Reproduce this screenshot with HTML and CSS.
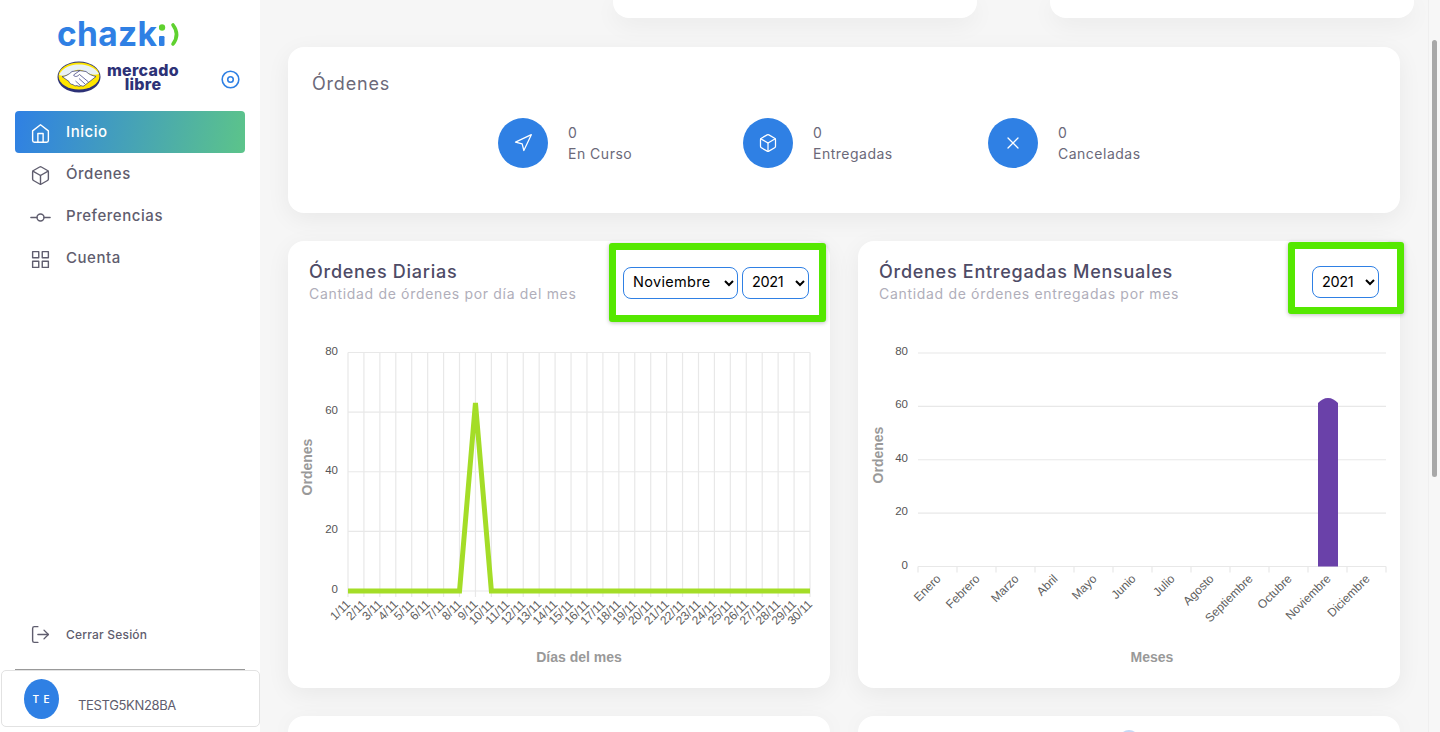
FILE: index.html
```html
<!DOCTYPE html>
<html lang="es">
<head>
    <meta charset="UTF-8">
    <title>Chazki - Inicio</title>
    <link rel="stylesheet" href="styles.css">
</head>
<body>
    <div class="app">
        <aside class="sidebar">
            <div class="brand">
                <div class="chazki">
                    <span class="chazki-word">chazk</span>
                    <svg class="chazki-mark" width="26" height="30" viewBox="0 0 26 30">
                        <rect x="0" y="14" width="5.5" height="10" rx="1.2" fill="#2f80e4"/>
                        <circle cx="3" cy="5.5" r="3.2" fill="#5fd12f"/>
                        <path d="M14 3c4.500 6 4.500 13 0 19" fill="none" stroke="#5fd12f" stroke-width="3.6" stroke-linecap="round"/>
                    </svg>
                </div>
                <div class="meli-row">
                    <svg class="meli-logo" width="44" height="32" viewBox="0 0 44 32">
                        <ellipse cx="22" cy="16" rx="21.500" ry="15.500" fill="#2d3277"/>
                        <ellipse cx="22" cy="15" rx="20.500" ry="13.500" fill="#ffe600"/>
                        <path d="M2 14C8 16 12 13 16 10.500 20 8 24 8 28 10.500 32 13 37 15 42 13 38 6 30 3.500 22 3.500S6 6 2 14z" fill="#e9f1f5"/>
                        <path d="M5 15.500c3 0 7-2 10-5l7-1 7 1c3 3 6 4 10 5l-5 4-6 4.500c-1 1.500-3 1.500-4 .5-1 1-3 1-4 0-1.500 .8-3 .2-4-1-2 0-3.500-1-4-3z" fill="#fff" stroke="#2d3277" stroke-width=".7"/>
                        <path d="M23 9.500l-6.500 4.500c1.500 2.500 4 1.500 6-.5l9 7.500M28 23l-6-5.500M23.500 24.500L18.500 20" fill="none" stroke="#2d3277" stroke-width=".7"/>
                    </svg>
                    <div class="meli-word">mercado<br>libre</div>
                    <svg class="icon disc" viewBox="0 0 24 24"><circle cx="12" cy="12" r="10.5"/><circle cx="12" cy="12" r="3.5"/></svg>
                </div>
            </div>

            <nav class="menu">
                <a class="menu-item active">
                    <svg class="icon" viewBox="0 0 24 24"><path d="M3 9l9-7 9 7v11a2 2 0 0 1-2 2H5a2 2 0 0 1-2-2z"/><polyline points="9 22 9 12 15 12 15 22"/></svg>
                    <span>Inicio</span>
                </a>
                <a class="menu-item">
                    <svg class="icon" viewBox="0 0 24 24"><path d="M21 16V8a2 2 0 0 0-1-1.73l-7-4a2 2 0 0 0-2 0l-7 4A2 2 0 0 0 3 8v8a2 2 0 0 0 1 1.73l7 4a2 2 0 0 0 2 0l7-4A2 2 0 0 0 21 16z"/><polyline points="3.27 6.96 12 12.01 20.73 6.96"/><line x1="12" y1="22.08" x2="12" y2="12"/></svg>
                    <span>Órdenes</span>
                </a>
                <a class="menu-item">
                    <svg class="icon" viewBox="0 0 24 24"><circle cx="12" cy="12" r="4"/><line x1="1" y1="12" x2="8" y2="12"/><line x1="16" y1="12" x2="23" y2="12"/></svg>
                    <span>Preferencias</span>
                </a>
                <a class="menu-item">
                    <svg class="icon" viewBox="0 0 24 24"><rect x="3" y="3" width="7" height="7"/><rect x="14" y="3" width="7" height="7"/><rect x="14" y="14" width="7" height="7"/><rect x="3" y="14" width="7" height="7"/></svg>
                    <span>Cuenta</span>
                </a>
            </nav>

            <div class="sidebar-bottom">
                <a class="logout">
                    <svg class="icon" viewBox="0 0 24 24"><path d="M9 21H5a2 2 0 0 1-2-2V5a2 2 0 0 1 2-2h4"/><polyline points="16 17 21 12 16 7"/><line x1="21" y1="12" x2="9" y2="12"/></svg>
                    Cerrar Sesión
                </a>
                <div class="sidebar-line"></div>
                <div class="user-box">
                    <div class="avatar">T E</div>
                    <span class="user-name">TESTG5KN28BA</span>
                </div>
            </div>
        </aside>

        <main class="content">
            <div class="top-row">
                <div class="card"></div>
                <div class="card"></div>
            </div>

            <section class="card summary">
                <h2 class="summary-title">Órdenes</h2>
                <div class="stats">
                    <div class="stat">
                        <div class="stat-circle">
                            <svg class="icon" viewBox="0 0 24 24"><polygon points="3 11 22 2 13 21 11 13 3 11"/></svg>
                        </div>
                        <div class="stat-text"><span>0</span><span>En Curso</span></div>
                    </div>
                    <div class="stat">
                        <div class="stat-circle">
                            <svg class="icon" viewBox="0 0 24 24"><path d="M21 16V8a2 2 0 0 0-1-1.73l-7-4a2 2 0 0 0-2 0l-7 4A2 2 0 0 0 3 8v8a2 2 0 0 0 1 1.73l7 4a2 2 0 0 0 2 0l7-4A2 2 0 0 0 21 16z"/><polyline points="3.27 6.96 12 12.01 20.73 6.96"/><line x1="12" y1="22.08" x2="12" y2="12"/></svg>
                        </div>
                        <div class="stat-text"><span>0</span><span>Entregadas</span></div>
                    </div>
                    <div class="stat">
                        <div class="stat-circle">
                            <svg class="icon" viewBox="0 0 24 24"><line x1="18" y1="6" x2="6" y2="18"/><line x1="6" y1="6" x2="18" y2="18"/></svg>
                        </div>
                        <div class="stat-text"><span>0</span><span>Canceladas</span></div>
                    </div>
                </div>
            </section>

            <div class="chart-row">
                <section class="card chart-card">
                    <div class="chart-head">
                        <h3>Órdenes Diarias</h3>
                        <p>Cantidad de órdenes por día del mes</p>
                    </div>
                    <div class="highlight highlight-daily">
                        <select class="filter filter-month">
                            <option>Noviembre</option>
                        </select>
                        <select class="filter filter-year">
                            <option>2021</option>
                        </select>
                    </div>
                    <svg id="chart-daily" class="chart" width="542" height="357"></svg>
                </section>

                <section class="card chart-card">
                    <div class="chart-head">
                        <h3>Órdenes Entregadas Mensuales</h3>
                        <p>Cantidad de órdenes entregadas por mes</p>
                    </div>
                    <div class="highlight highlight-monthly">
                        <select class="filter filter-year">
                            <option>2021</option>
                        </select>
                    </div>
                    <svg id="chart-monthly" class="chart" width="542" height="357"></svg>
                </section>
            </div>

            <div class="chart-row bottom-row">
                <div class="card bottom-card"></div>
                <div class="card bottom-card"><div class="gauge-peek"></div></div>
            </div>
        </main>

        <div class="scrollbar"><div class="scrollbar-thumb"></div></div>
    </div>

    <script src="charts.js"></script>
</body>
</html>
```

FILE: styles.css
```css
* {
    box-sizing: border-box;
}

html, body {
    margin: 0;
    height: 100%;
    overflow: hidden;
}

body {
    font-family: "Inter", "Noto Sans", sans-serif;
    background-color: #f6f6f6;
    color: #5f5d6e;
}

.app {
    display: flex;
    height: 732px;
    position: relative;
    overflow: hidden;
}

/* Sidebar */
.sidebar {
    width: 260px;
    flex-shrink: 0;
    background-color: white;
    display: flex;
    flex-direction: column;
}

.brand {
    height: 111px;
    padding: 14px 0 0 57px;
}

.chazki {
    display: flex;
    align-items: flex-start;
    height: 42px;
}

.chazki-word {
    font-family: "Inter", sans-serif;
    font-weight: 700;
    font-size: 33.5px;
    line-height: 40px;
    letter-spacing: 0.3px;
    color: #2f80e4;
}

.chazki-mark {
    margin: 8px 0 0 1.5px;
}

.meli-row {
    display: flex;
    align-items: center;
    margin-top: 5px;
}

.meli-word {
    width: 78px;
    margin-left: 3px;
    font-family: "Inter", sans-serif;
    font-weight: 800;
    font-size: 16px;
    line-height: 14px;
    letter-spacing: 0.3px;
    text-align: center;
    color: #2d3277;
}

.icon {
    fill: none;
    stroke: currentColor;
    stroke-width: 1.6;
    stroke-linecap: round;
    stroke-linejoin: round;
}

.disc {
    width: 19px;
    height: 19px;
    margin: 4px 0 0 39px;
    stroke-width: 2;
    color: #2f80e4;
}

.menu {
    padding: 0 15px;
}

.menu-item {
    display: flex;
    align-items: center;
    gap: 15px;
    height: 42px;
    padding-left: 15px;
    border-radius: 4px;
    font-size: 15px;
    font-weight: 500;
    letter-spacing: 0.55px;
    color: #5f5d6e;
}

.menu-item .icon {
    width: 21px;
    height: 21px;
    margin-top: 2px;
}

.menu-item span {
    margin-bottom: 2px;
}

.menu-item.active {
    background: linear-gradient(100deg, #2f80e4, #5cc48a);
    color: white;
}

.sidebar-bottom {
    margin-top: auto;
    padding-bottom: 5px;
}

.logout {
    display: flex;
    align-items: center;
    gap: 15px;
    margin-left: 30px;
    height: 22px;
    font-size: 12px;
    font-weight: 500;
    letter-spacing: 0.2px;
    color: #5f5d6e;
}

.logout .icon {
    width: 21px;
    height: 21px;
}

.sidebar-line {
    height: 1px;
    margin: 24px 15px 0;
    background-color: #999;
}

.user-box {
    display: flex;
    align-items: center;
    height: 57px;
    margin-left: 1px;
    padding-left: 22px;
    background-color: white;
    border: 1px solid #e2e2e2;
    border-radius: 5px;
}

.avatar {
    width: 35px;
    height: 40px;
    border-radius: 50%;
    background-color: #2f80e4;
    color: white;
    font-size: 10px;
    font-weight: 600;
    text-align: center;
    line-height: 40px;
    letter-spacing: 1px;
}

.user-name {
    margin: 12px 0 0 19px;
    font-size: 13px;
    letter-spacing: -0.35px;
    color: #5f5d6e;
}

/* Main content */
.content {
    flex: 1;
    padding: 0 40px 0 28px;
}

.card {
    background-color: white;
    border-radius: 16px;
    box-shadow: 0 6px 24px rgba(0, 0, 0, 0.06);
}

.top-row {
    display: flex;
    gap: 73px;
    height: 18px;
    margin: 0 -14px 29px 325px;
}

.top-row .card {
    flex: 1;
    border-radius: 0 0 16px 16px;
}

.summary {
    height: 166px;
    margin-bottom: 28px;
    padding: 26px 24px 0;
}

.summary-title {
    margin: 0;
    font-size: 18px;
    line-height: 22px;
    font-weight: 400;
    letter-spacing: 0.8px;
    color: #6b6979;
}

.stats {
    display: flex;
    margin: 23px 0 0 186px;
}

.stat {
    display: flex;
    align-items: center;
    gap: 20px;
    width: 245px;
}

.stat-circle {
    width: 50px;
    height: 50px;
    border-radius: 50%;
    background-color: #2f80e4;
    color: white;
    display: flex;
    align-items: center;
    justify-content: center;
}

.stat-circle .icon {
    width: 20px;
    height: 20px;
    stroke-width: 1.5;
}

.stat-text {
    display: flex;
    flex-direction: column;
    gap: 4px;
    font-size: 14px;
    line-height: 17px;
    letter-spacing: 0.5px;
    color: #6b6979;
}

.chart-row {
    display: flex;
    gap: 28px;
    margin-bottom: 28px;
}

.chart-card {
    position: relative;
    width: 542px;
    height: 447px;
    flex-shrink: 0;
}

.chart-head {
    height: 90px;
    padding: 19px 0 0 21px;
}

.chart-head h3 {
    margin: 0;
    font-size: 18px;
    line-height: 24px;
    font-weight: 500;
    letter-spacing: 0.73px;
    color: #4e4b66;
}

.chart-head p {
    margin: 0;
    font-size: 14px;
    line-height: 19px;
    letter-spacing: 0.68px;
    color: #b0aeba;
}

.chart {
    display: block;
}

.chart text {
    font-family: "Liberation Sans", Arial, sans-serif;
}

/* Green annotation boxes drawn over the card */
.highlight {
    position: absolute;
    display: flex;
    align-items: center;
    gap: 4px;
    border: 7px solid #55e800;
    border-radius: 3px;
    background-color: white;
    box-shadow: 0 1px 4px rgba(0, 0, 0, 0.25);
}

.highlight-daily {
    left: 321px;
    top: 2px;
    width: 217px;
    height: 79px;
    padding: 0 0 0 7px;
}

.highlight-monthly {
    left: 430px;
    top: 1px;
    width: 116px;
    height: 72px;
    padding: 8px 0 0 17px;
}

.filter {
    height: 32px;
    padding: 0 5px 2px;
    background-color: white;
    border: 1px solid #2f80e4;
    border-radius: 8px;
    font-family: "Inter", sans-serif;
    font-size: 14.5px;
    color: black;
}

.filter-month {
    width: 115px;
    letter-spacing: 0.3px;
}

.filter-year {
    width: 67px;
    letter-spacing: -0.4px;
}

.bottom-row {
    margin-bottom: 0;
}

.bottom-card {
    width: 542px;
    height: 16px;
    border-radius: 16px 16px 0 0;
    overflow: hidden;
}

.gauge-peek {
    width: 20px;
    height: 20px;
    margin: 14px 0 0 261px;
    border-radius: 50%;
    background-color: #c6d8f5;
}

/* Fake scrollbar, the page itself does not scroll */
.scrollbar {
    position: absolute;
    top: 0;
    right: 0;
    width: 12px;
    height: 100%;
    background-color: #f7f7f7;
    border-left: 1px solid #efefef;
}

.scrollbar-thumb {
    width: 5px;
    height: 437px;
    margin: 40px 0 0 3px;
    border-radius: 3px;
    background-color: #a8a8a8;
}
```

FILE: charts.js
```js
var NS = "http://www.w3.org/2000/svg";

function add(svg, tag, attrs, text) {
    var el = document.createElementNS(NS, tag);
    for (var key in attrs) {
        el.setAttribute(key, attrs[key]);
    }
    if (text) {
        el.textContent = text;
    }
    svg.appendChild(el);
    return el;
}

function yAxis(svg, left, right, top, bottom) {
    for (var i = 0; i <= 4; i++) {
        var y = top + (bottom - top) * i / 4;
        add(svg, "line", { x1: left, x2: right, y1: y, y2: y, stroke: "#e8e8e8", "stroke-width": 1.2 });
        add(svg, "text", { x: left - 10, y: y + 2, "text-anchor": "end", "font-size": 11.5, fill: "#555" }, String(80 - i * 20));
    }
}

function slanted(svg, x, y, label) {
    add(svg, "text", {
        x: x, y: y, "text-anchor": "end", "font-size": 12, fill: "#606060",
        transform: "rotate(-45 " + x + " " + y + ")"
    }, label);
}

function axisTitles(svg, yX, yMid, xMid, xY, xTitle) {
    add(svg, "text", {
        x: yX, y: yMid, "text-anchor": "middle", "font-size": 14, "font-weight": "bold", fill: "#999",
        transform: "rotate(-90 " + yX + " " + yMid + ")"
    }, "Ordenes");
    add(svg, "text", { x: xMid, y: xY, "text-anchor": "middle", "font-size": 14, "font-weight": "bold", fill: "#999" }, xTitle);
}

function drawDaily() {
    var svg = document.getElementById("chart-daily");
    var left = 60, right = 522, top = 21.5, bottom = 260;
    var step = (right - left) / 29;

    yAxis(svg, left, right, top, bottom);

    var points = [];
    for (var i = 0; i < 30; i++) {
        var x = left + step * i;
        add(svg, "line", { x1: x, x2: x, y1: top, y2: bottom + 6, stroke: "#e8e8e8", "stroke-width": 1.2 });
        slanted(svg, x + 3, bottom + 14, (i + 1) + "/11");
        points.push(x + "," + (i === 8 ? 72 : bottom));
    }
    add(svg, "polyline", { points: points.join(" "), fill: "none", stroke: "#a4dd27", "stroke-width": 5, "stroke-linejoin": "miter" });

    axisTitles(svg, 24, 136, 291, 331, "Días del mes");
}

function drawMonthly() {
    var svg = document.getElementById("chart-monthly");
    var left = 60, right = 528, top = 22, bottom = 235.5;
    var step = (right - left) / 12;
    var months = ["Enero", "Febrero", "Marzo", "Abril", "Mayo", "Junio", "Julio", "Agosto", "Septiembre", "Octubre", "Noviembre", "Diciembre"];

    yAxis(svg, left, right, top, bottom);

    for (var i = 0; i <= 12; i++) {
        var x = left + step * i;
        add(svg, "line", { x1: x, x2: x, y1: bottom, y2: bottom + 6, stroke: "#e8e8e8", "stroke-width": 1.2 });
        if (i < 12) {
            slanted(svg, x + step / 2 + 4, bottom + 13, months[i]);
        }
    }

    add(svg, "path", { d: "M460 235.5V72c3-3 6-5 10-5s7 2 10 5V235.5z", fill: "#6a41a9" });

    axisTitles(svg, 25, 124, 294, 331, "Meses");
}

drawDaily();
drawMonthly();
```
